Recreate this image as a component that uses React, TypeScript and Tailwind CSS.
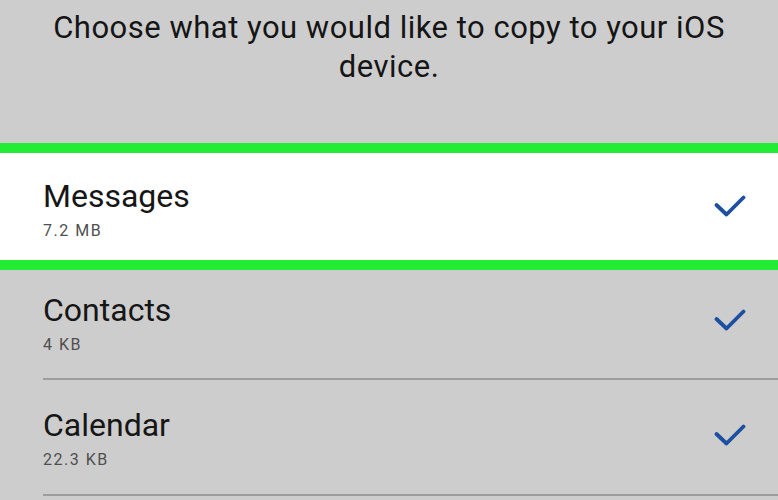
import React from "react";

function Check() {
  return (
    <svg width="32" height="22" viewBox="0 0 32 22" className="shrink-0">
      <path
        d="M2.5 10 L12.5 19.5 L29.5 2.5"
        fill="none"
        stroke="#1d4fa0"
        strokeWidth="3.8"
        strokeLinecap="round"
        strokeLinejoin="round"
      />
    </svg>
  );
}

type Item = { name: string; size: string };

function RowContent({ item, pt, pb, border }: { item: Item; pt: string; pb: string; border: boolean }) {
  return (
    <div
      className={`flex items-center justify-between pr-[32px] ${pt} ${pb} ${
        border ? "border-b-2 border-[#9d9d9d]" : ""
      }`}
    >
      <div className="flex flex-col">
        <div className="text-[32px] leading-[38px] text-[#161616]">{item.name}</div>
        <div className="mt-[6px] text-[16px] leading-[20px] tracking-[1.5px] text-[#4f4f4f]">{item.size}</div>
      </div>
      <div className="mt-[-6px]">
        <Check />
      </div>
    </div>
  );
}

export default function App() {
  return (
    <div
      className="w-[778px] h-[500px] overflow-hidden bg-[#cdcdcd]"
      style={{ fontFamily: "Roboto, 'Noto Sans', sans-serif" }}
    >
      <p className="pt-[8px] px-[30px] text-center text-[31px] leading-[39px] tracking-[0.5px] text-[#151515]">
        Choose what you would like to copy to your iOS device.
      </p>

      <div className="mt-[57px] bg-white border-y-[10px] border-[#22ec33] pl-[43px]">
        <RowContent item={{ name: "Messages", size: "7.2 MB" }} pt="pt-[24px]" pb="pb-[19px]" border={false} />
      </div>

      <div className="pl-[43px]">
        <RowContent item={{ name: "Contacts", size: "4 KB" }} pt="pt-[21px]" pb="pb-[23px]" border={true} />
      </div>

      <div className="pl-[43px]">
        <RowContent item={{ name: "Calendar", size: "22.3 KB" }} pt="pt-[26px]" pb="pb-[24px]" border={true} />
      </div>
    </div>
  );
}
